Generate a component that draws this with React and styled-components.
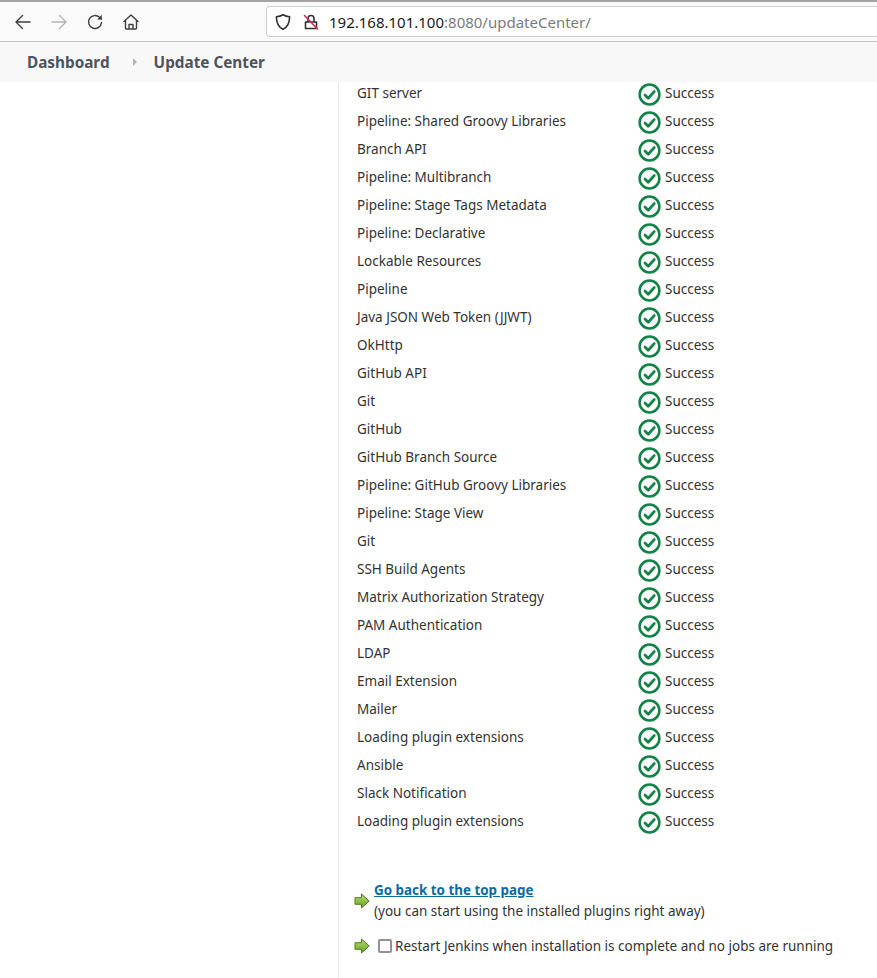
import { createGlobalStyle, styled } from 'styled-components';

const plugins = [
  'GIT server',
  'Pipeline: Shared Groovy Libraries',
  'Branch API',
  'Pipeline: Multibranch',
  'Pipeline: Stage Tags Metadata',
  'Pipeline: Declarative',
  'Lockable Resources',
  'Pipeline',
  'Java JSON Web Token (JJWT)',
  'OkHttp',
  'GitHub API',
  'Git',
  'GitHub',
  'GitHub Branch Source',
  'Pipeline: GitHub Groovy Libraries',
  'Pipeline: Stage View',
  'Git',
  'SSH Build Agents',
  'Matrix Authorization Strategy',
  'PAM Authentication',
  'LDAP',
  'Email Extension',
  'Mailer',
  'Loading plugin extensions',
  'Ansible',
  'Slack Notification',
  'Loading plugin extensions',
];

const GlobalStyle = createGlobalStyle`
  html, body {
    margin: 0;
    padding: 0;
    background: #fff;
  }
  body {
    font-family: "Noto Sans", "Open Sans", sans-serif;
    font-size: 13.5px;
    color: #333;
  }
`;

const Page = styled.div`
  width: 877px;
  height: 978px;
  overflow: hidden;
  display: flex;
  flex-direction: column;
`;

const Toolbar = styled.div`
  height: 39px;
  flex: none;
  display: flex;
  align-items: center;
  background: #fafafa;
  border-top: 2px solid #a3a3a3;
  border-bottom: 1px solid #c4c4c4;
`;

const NavIcon = styled.svg`
  width: 18px;
  height: 18px;
  flex: none;
  margin-left: ${(p) => p.$gap}px;
  fill: none;
  stroke: ${(p) => (p.$off ? '#b4b4b4' : '#3f3f42')};
  stroke-width: 1.4;
  stroke-linecap: round;
  stroke-linejoin: round;
`;

const UrlBar = styled.div`
  margin-left: 126px;
  width: 640px;
  height: 31px;
  display: flex;
  align-items: center;
  box-sizing: border-box;
  background: #fff;
  border: 1px solid #cfcfcf;
  border-right: none;
  border-radius: 4px 0 0 4px;
  padding-left: 7px;
  margin-right: -40px;
`;

const UrlIcon = styled.svg`
  width: 18px;
  height: 18px;
  flex: none;
  margin-right: ${(p) => p.$gap}px;
  fill: none;
  stroke: #2f2f33;
  stroke-width: 1.6;
  stroke-linecap: round;
  stroke-linejoin: round;
`;

const Host = styled.span`
  font-size: 15px;
  color: #1a1a1a;
`;

const UrlRest = styled.span`
  font-size: 15px;
  color: #7b7b7f;
`;

const Breadcrumbs = styled.div`
  height: 40px;
  flex: none;
  display: flex;
  align-items: center;
  padding-left: 27px;
  background: #f8f8f8;
  color: #4d545d;
  font-size: 15.3px;
  font-weight: 700;
`;

const Caret = styled.span`
  width: 0;
  height: 0;
  margin: 0 17px 0 23px;
  border-left: 4px solid #b5b5b5;
  border-top: 4px solid transparent;
  border-bottom: 4px solid transparent;
`;

const Body = styled.div`
  flex: 1;
  display: flex;
  min-height: 0;
`;

const Side = styled.div`
  width: 338px;
  flex: none;
`;

const Main = styled.div`
  flex: 1;
  overflow: hidden;
  border-left: 1px solid #e9e9e9;
  padding-left: 18px;
`;

const Rows = styled.div`
  margin-top: -3px;
  display: flex;
  flex-direction: column;
`;

const Row = styled.div`
  height: 28px;
  display: grid;
  grid-template-columns: 277px 23px auto;
  column-gap: 4px;
  align-items: center;
  white-space: nowrap;
  line-height: 26px;
`;

const CheckIcon = styled.svg`
  width: 23px;
  height: 23px;
  margin-top: 2px;
  fill: none;
  stroke: #138347;
`;

const Actions = styled.div`
  margin-top: 45px;
  display: flex;
  flex-direction: column;
  gap: 15px;
  margin-left: -3px;
`;

const ActionRow = styled.div`
  display: flex;
  align-items: center;
  gap: 4px;
`;

const ActionText = styled.div`
  line-height: 21px;
`;

const TopLink = styled.a`
  color: #0b6aa2;
  font-size: 13.4px;
  font-weight: 700;
  text-decoration: underline;
`;

const Box = styled.span`
  width: 14px;
  height: 14px;
  flex: none;
  box-sizing: border-box;
  margin-left: 4px;
  margin-right: -1px;
  border: 2px solid #8f8f9d;
  border-radius: 2px;
  background: #fff;
`;

const GreenArrow = styled.svg`
  width: 16px;
  height: 16px;
  flex: none;
`;

function Arrow() {
  return (
    <GreenArrow viewBox="0 0 16 16">
      <defs>
        <linearGradient id="arrowFill" x1="0" y1="0" x2="0" y2="1">
          <stop offset="0" stopColor="#b9de6e" />
          <stop offset="1" stopColor="#62a322" />
        </linearGradient>
      </defs>
      <path
        d="M1 4.700h6.500V1L15.200 8l-7.700 7v-3.700H1z"
        fill="url(#arrowFill)"
        stroke="#4f7d1c"
        strokeWidth="1"
        strokeLinejoin="round"
      />
    </GreenArrow>
  );
}

function SuccessIcon() {
  return (
    <CheckIcon viewBox="0 0 23 23">
      <circle cx="11.500" cy="11.500" r="9.900" strokeWidth="2.500" />
      <path d="M7 12l3.200 3.200L16.200 8.600" strokeWidth="2.800" strokeLinecap="round" strokeLinejoin="round" />
    </CheckIcon>
  );
}

export default function App() {
  return (
    <Page>
      <GlobalStyle />
      <Toolbar>
        <NavIcon $gap={14} viewBox="0 0 18 18">
          <path d="M16 9H2M8.500 2.500L2 9l6.500 6.500" />
        </NavIcon>
        <NavIcon $gap={18} $off viewBox="0 0 18 18">
          <path d="M2 9h14M9.500 2.500L16 9l-6.500 6.500" />
        </NavIcon>
        <NavIcon $gap={18} viewBox="0 0 18 18">
          <path d="M15.500 9.500a6.500 6.500 0 1 1-2-5.200L15.500 6" />
          <path d="M15.800 1.800v4.600h-4.600" fill="#3f3f42" stroke="none" />
        </NavIcon>
        <NavIcon $gap={18} viewBox="0 0 18 18">
          <path d="M2 8.500L9 2l7 6.500M3.500 7.500V15a1 1 0 0 0 1 1h9a1 1 0 0 0 1-1V7.500M7 16v-4.500h4V16" />
        </NavIcon>
        <UrlBar>
          <UrlIcon $gap={10} viewBox="0 0 18 18">
            <path d="M9 1.800c2 1.200 4.300 1.800 6.600 1.900 0 6.400-2 10.400-6.600 12.500C4.400 14.100 2.400 10.100 2.400 3.700 4.700 3.600 7 3 9 1.800z" />
          </UrlIcon>
          <UrlIcon $gap={9} viewBox="0 0 18 18">
            <path d="M3.500 9h11v6.500h-11zM6 9V5.500a3 3 0 0 1 6 0V9" />
            <path d="M2.500 2.500L15.500 16" stroke="#e22850" />
          </UrlIcon>
          <Host>192.168.101.100</Host>
          <UrlRest>:8080/updateCenter/</UrlRest>
        </UrlBar>
      </Toolbar>
      <Breadcrumbs>
        Dashboard
        <Caret />
        Update Center
      </Breadcrumbs>
      <Body>
        <Side />
        <Main>
          <Rows>
            {plugins.map((name, i) => (
              <Row key={i}>
                <span>{name}</span>
                <SuccessIcon />
                <span>Success</span>
              </Row>
            ))}
          </Rows>
          <Actions>
            <ActionRow>
              <Arrow />
              <ActionText>
                <TopLink href="#">Go back to the top page</TopLink>
                <br />
                (you can start using the installed plugins right away)
              </ActionText>
            </ActionRow>
            <ActionRow>
              <Arrow />
              <Box />
              <span>Restart Jenkins when installation is complete and no jobs are running</span>
            </ActionRow>
          </Actions>
        </Main>
      </Body>
    </Page>
  );
}
